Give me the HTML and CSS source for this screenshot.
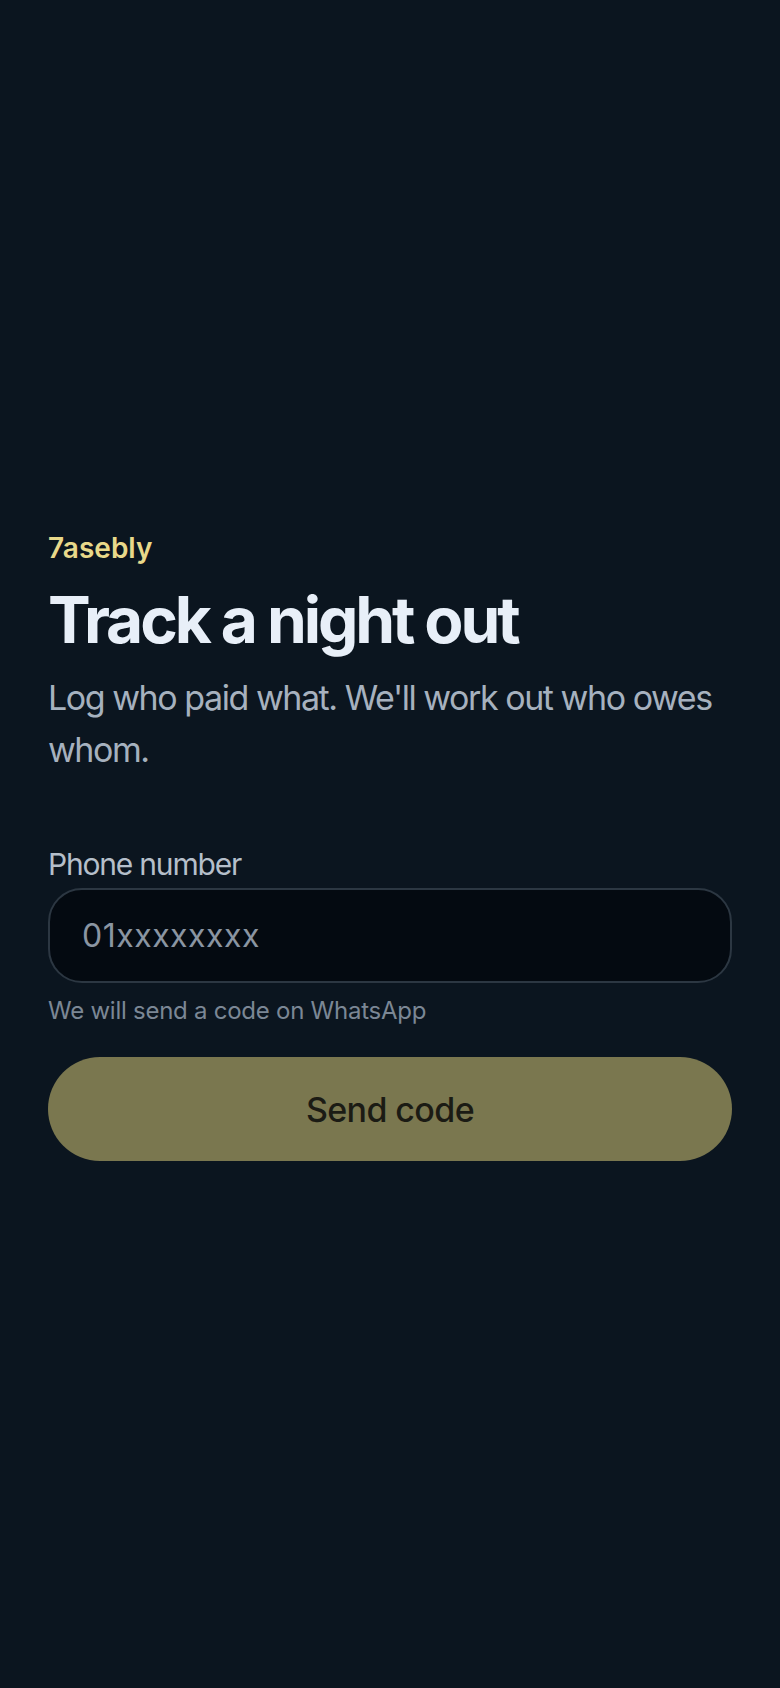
FILE: index.html
```html
<!DOCTYPE html>
<html lang="en">
<head>
  <meta charset="UTF-8" />
  <meta name="viewport" content="width=device-width, initial-scale=1" />
  <title>7asebly - Sign in</title>
  <link rel="stylesheet" href="styles.css">
</head>
<body>
  <main class="screen">
    <section class="intro">
      <div class="brand">7asebly</div>
      <h1>Track a night out</h1>
      <p class="lead">Log who paid what. We'll work out who owes whom.</p>
    </section>

    <form class="login">
      <label for="phone">Phone number</label>
      <input type="tel" id="phone" name="phone" placeholder="01xxxxxxxx">
      <p class="hint">We will send a code on WhatsApp</p>
      <button type="submit">Send code</button>
    </form>
  </main>
</body>
</html>
```

FILE: styles.css
```css
* {
  box-sizing: border-box;
  margin: 0;
  padding: 0;
}

body {
  font-family: Inter, "Noto Sans", sans-serif;
  background-color: #0b151f;
  color: #e6edf5;
}

.screen {
  min-height: 100vh;
  display: flex;
  flex-direction: column;
  justify-content: center;
  padding: 3px 48px 0;
}

/* Heading block */
.brand {
  font-size: 28px;
  line-height: 36px;
  font-weight: 600;
  color: #e9d98a;
  letter-spacing: 0;
}

h1 {
  margin-top: 16px;
  font-size: 64px;
  line-height: 76px;
  font-weight: 700;
  letter-spacing: -3.1px;
  color: #e8eff8;
}

.lead {
  margin-top: 14px;
  font-size: 34px;
  line-height: 52px;
  color: #a6b1be;
  letter-spacing: -1.45px;
}

/* Form */
.login {
  margin-top: 69px;
  display: flex;
  flex-direction: column;
}

label {
  font-size: 30px;
  line-height: 38px;
  color: #b5bfca;
  letter-spacing: -1.2px;
}

input {
  margin-top: 5px;
  height: 95px;
  padding: 0 32px;
  background-color: #040a11;
  border: 2px solid #2c3742;
  border-radius: 34px;
  font-family: inherit;
  font-size: 32px;
  color: #e6edf5;
  letter-spacing: 0.5px;
  outline: none;
}

input::placeholder {
  color: #8a95a2;
}

.hint {
  margin-top: 12px;
  font-size: 24px;
  line-height: 32px;
  color: #7b8795;
  letter-spacing: -0.25px;
}

button {
  margin-top: 30px;
  height: 104px;
  border: none;
  border-radius: 52px;
  background-color: #7a774f;
  color: #1b1b14;
  font-family: inherit;
  font-size: 34px;
  font-weight: 500;
  letter-spacing: -0.6px;
  cursor: pointer;
}
```
